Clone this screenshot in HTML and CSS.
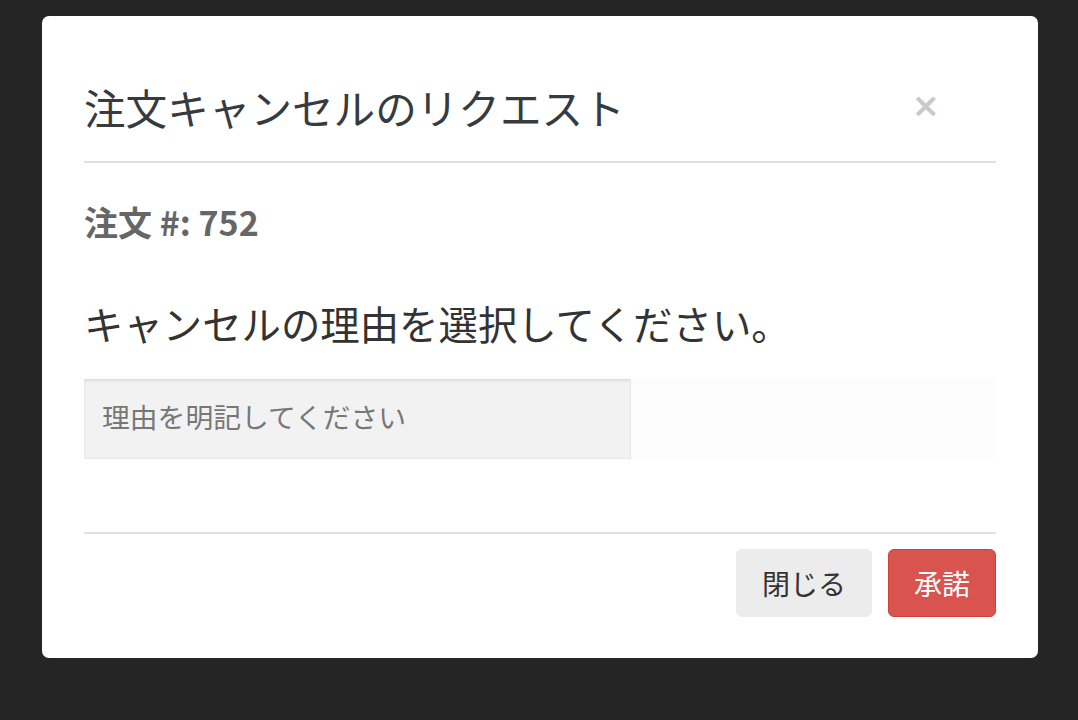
FILE: index.html
```html
<!DOCTYPE html>
<html lang="ja">
<head>
<meta charset="utf-8">
<title>注文キャンセルのリクエスト</title>
<link rel="stylesheet" href="styles.css">
</head>
<body>
<div class="overlay">
  <div class="modal">
    <div class="modal-header">
      <h2 class="modal-title">注文キャンセルのリクエスト</h2>
      <button class="close" type="button" aria-label="閉じる">×</button>
    </div>
    <div class="modal-body">
      <h4 class="order-no">注文 #: 752</h4>
      <p class="question">キャンセルの理由を選択してください。</p>
      <div class="reason-field">
        <textarea class="reason" placeholder="理由を明記してください"></textarea>
      </div>
    </div>
    <div class="modal-footer">
      <button class="btn btn-default" type="button">閉じる</button>
      <button class="btn btn-danger" type="button">承諾</button>
    </div>
  </div>
</div>
</body>
</html>
```

FILE: styles.css
```css
* { box-sizing: border-box; }
html, body {
  margin: 0;
  padding: 0;
  background: #252525;
  font-family: "Noto Sans CJK JP", "Noto Sans", sans-serif;
}
.overlay {
  padding: 16px 40px 0 42px;
}
.modal {
  width: 996px;
  height: 642px;
  background: #fff;
  border-radius: 7px;
  padding: 0 42px;
  display: flex;
  flex-direction: column;
}
.modal-header {
  display: flex;
  align-items: center;
  padding: 66px 0 29px;
  border-bottom: 2px solid #dee1e4;
}
.modal-title {
  margin: 0;
  flex: 1;
  font-size: 41.6px;
  line-height: 50px;
  font-weight: 400;
  color: #363b40;
}
.close {
  border: 0;
  background: none;
  padding: 0;
  margin: 0 56px 4px 0;
  font-family: "DejaVu Sans", sans-serif;
  font-size: 34px;
  line-height: 1;
  font-weight: 700;
  color: #c9c9c9;
}
.modal-body {
  padding-top: 38px;
  height: 369px;
}
.order-no {
  margin: 0;
  font-size: 34px;
  line-height: 41px;
  font-weight: 700;
  color: #666;
}
.question {
  margin: 57px 0 0;
  font-size: 39.4px;
  line-height: 48px;
  color: #333;
}
.reason-field {
  margin-top: 32px;
  background: #fcfcfc;
  height: 80px;
}
.reason {
  display: block;
  width: 547px;
  height: 80px;
  margin: 0;
  padding: 17px 17px;
  background: #f2f2f2;
  border: 1px solid #e8e8e8;
  border-top-color: #dcdcdc;
  box-shadow: inset 0 2px 2px rgba(0, 0, 0, 0.05);
  font-family: inherit;
  font-size: 27.8px;
  line-height: 38px;
  color: #555;
  resize: none;
  outline: none;
}
.reason::placeholder { color: #777; }
.modal-footer {
  border-top: 2px solid #dee1e4;
  padding-top: 15px;
  display: flex;
  justify-content: flex-end;
  gap: 16px;
}
.btn {
  height: 68px;
  padding: 0 25px;
  border-radius: 6px;
  font-family: inherit;
  font-size: 28px;
  line-height: 1;
  border: 1px solid transparent;
}
.btn-default {
  background: #ececec;
  border-color: #ececec;
  color: #333;
}
.btn-danger {
  background: #d9534f;
  border-color: #d43f3a;
  color: #fff;
}
```
